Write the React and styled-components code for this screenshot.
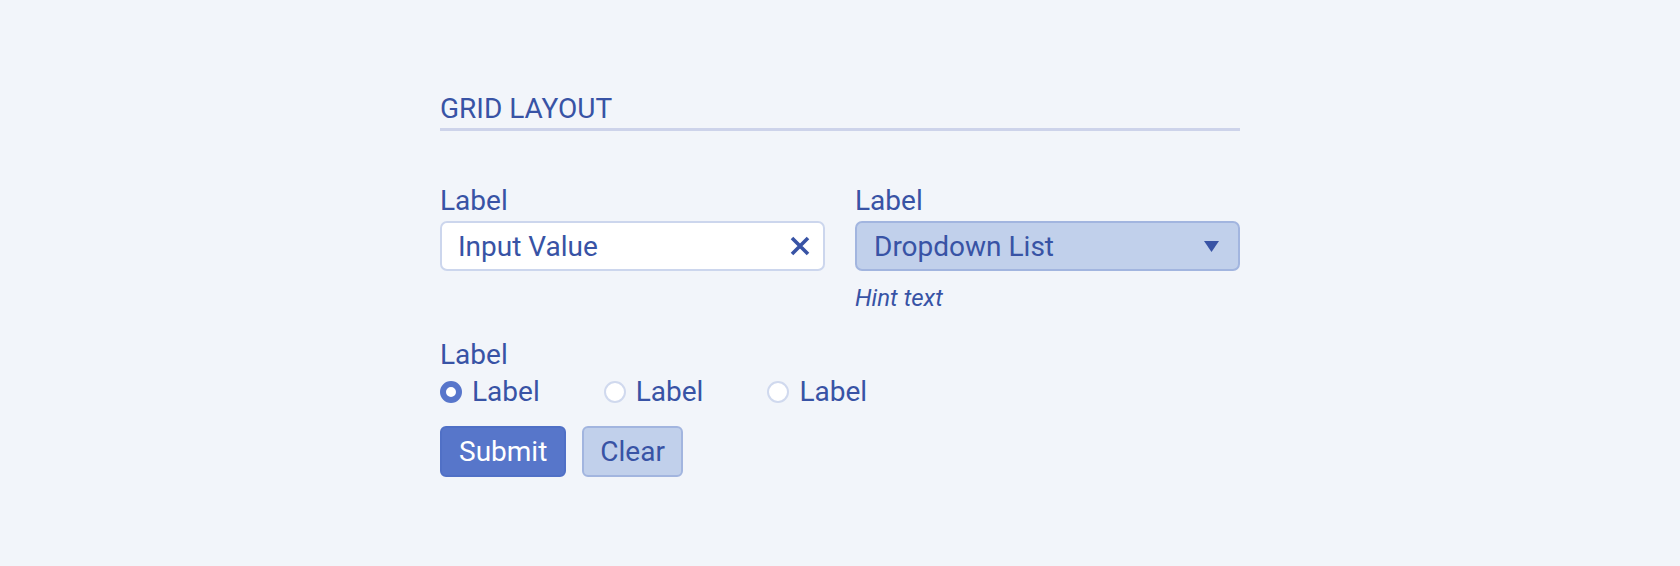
import React, { useState } from "react";
import styled, { createGlobalStyle } from "styled-components";

const GlobalStyle = createGlobalStyle`
  html, body {
    margin: 0;
    padding: 0;
    background: #f2f5fa;
  }
  * {
    box-sizing: border-box;
  }
`;

const ink = "#3853a5";

const Page = styled.div`
  min-height: 566px;
  background: #f2f5fa;
  padding-top: 92px;
  font-family: Roboto, "Liberation Sans", sans-serif;
  color: ${ink};
`;

const Form = styled.form`
  width: 800px;
  margin: 0 auto;
`;

const Title = styled.h2`
  margin: 0;
  font-size: 28px;
  font-weight: 400;
  line-height: 33px;
  padding-bottom: 3px;
  border-bottom: 3px solid #cdd3ea;
`;

const Grid = styled.div`
  display: grid;
  grid-template-columns: 385px 385px;
  column-gap: 30px;
  row-gap: 26px;
  margin-top: 53px;
`;

const Field = styled.div`
  display: flex;
  flex-direction: column;
  grid-column: ${(p) => (p.$wide ? "1 / -1" : "auto")};
`;

const Label = styled.label`
  font-size: 28px;
  line-height: 33px;
  margin-bottom: 4px;
`;

const Box = styled.div`
  height: 50px;
  display: flex;
  align-items: center;
  border-radius: 7px;
  border: 2px solid ${(p) => (p.$filled ? "#a2b5df" : "#ccd6ed")};
  background: ${(p) => (p.$filled ? "#c1d0eb" : "#ffffff")};
  padding: ${(p) => (p.$filled ? "0 19px 0 17px" : "0 13px 0 16px")};
  cursor: ${(p) => (p.$filled ? "pointer" : "text")};
`;

const TextInput = styled.input`
  flex: 1;
  min-width: 0;
  border: none;
  outline: none;
  background: transparent;
  padding: 0;
  font: inherit;
  font-size: 28px;
  color: ${ink};
`;

const SelectText = styled.span`
  flex: 1;
  font-size: 28px;
`;

const IconButton = styled.button`
  border: none;
  background: none;
  padding: 0;
  display: flex;
  cursor: pointer;
`;

const Hint = styled.div`
  margin-top: 13px;
  font-size: 24px;
  font-style: italic;
  line-height: 28px;
`;

const RadioRow = styled.div`
  display: flex;
  gap: 64px;
`;

const RadioItem = styled.label`
  display: flex;
  align-items: center;
  gap: 10px;
  font-size: 28px;
  line-height: 33px;
  cursor: pointer;
`;

const RadioDot = styled.span`
  width: 22px;
  height: 22px;
  border-radius: 50%;
  background: #ffffff;
  border: ${(p) => (p.$on ? "6.5px solid #5876cb" : "2px solid #d0d9ee")};
`;

const Actions = styled.div`
  display: flex;
  gap: 16px;
  margin-top: 18px;
`;

const Button = styled.button`
  height: 51px;
  padding: 0 ${(p) => (p.$primary ? "17px" : "16px")};
  border-radius: 6px;
  font-family: inherit;
  font-size: 28px;
  cursor: pointer;
  border: 2px solid ${(p) => (p.$primary ? "#5070c6" : "#a2b5df")};
  background: ${(p) => (p.$primary ? "#5776ca" : "#c1d0eb")};
  color: ${(p) => (p.$primary ? "#ffffff" : ink)};
`;

const CloseIcon = () => (
  <svg width="20" height="20" viewBox="0 0 20 20">
    <path d="M2 2 L18 18 M18 2 L2 18" stroke={ink} strokeWidth="3.6" fill="none" />
  </svg>
);

const Caret = () => (
  <svg width="15" height="11" viewBox="0 0 15 11">
    <path d="M0 0 H15 L7.5 11 Z" fill={ink} />
  </svg>
);

export default function App() {
  const [value, setValue] = useState("Input Value");
  const [choice, setChoice] = useState(0);

  return (
    <>
      <GlobalStyle />
      <Page>
        <Form onSubmit={(e) => e.preventDefault()}>
          <Title>GRID LAYOUT</Title>
          <Grid>
            <Field>
              <Label>Label</Label>
              <Box>
                <TextInput value={value} onChange={(e) => setValue(e.target.value)} />
                <IconButton type="button" onClick={() => setValue("")}>
                  <CloseIcon />
                </IconButton>
              </Box>
            </Field>
            <Field>
              <Label>Label</Label>
              <Box $filled>
                <SelectText>Dropdown List</SelectText>
                <Caret />
              </Box>
              <Hint>Hint text</Hint>
            </Field>
            <Field $wide>
              <Label>Label</Label>
              <RadioRow>
                {[0, 1, 2].map((i) => (
                  <RadioItem key={i} onClick={() => setChoice(i)}>
                    <RadioDot $on={choice === i} />
                    Label
                  </RadioItem>
                ))}
              </RadioRow>
            </Field>
          </Grid>
          <Actions>
            <Button $primary type="submit">Submit</Button>
            <Button type="button">Clear</Button>
          </Actions>
        </Form>
      </Page>
    </>
  );
}
